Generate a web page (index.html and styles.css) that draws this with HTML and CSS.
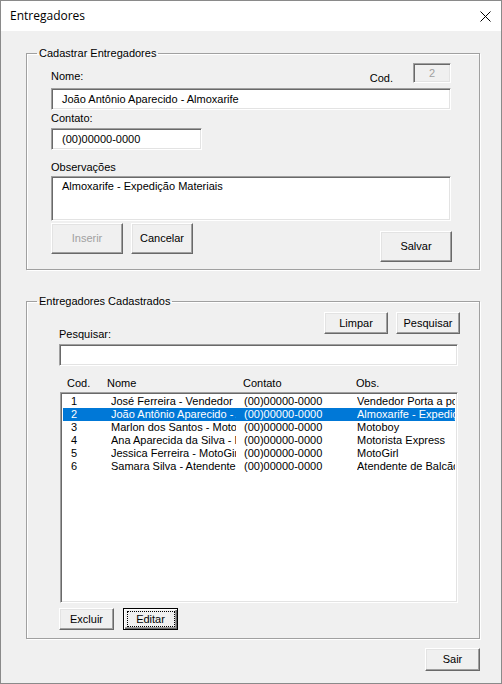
FILE: index.html
```html
<!DOCTYPE html>
<html lang="pt-BR">
<head>
<meta charset="utf-8">
<title>Entregadores</title>
<link rel="stylesheet" href="styles.css">
</head>
<body>
<div class="window">
  <div class="titlebar">
    <span class="title">Entregadores</span>
    <svg class="close" width="11" height="11" viewBox="0 0 11 11"><path d="M0.5 0.5 L10.5 10.5 M10.5 0.5 L0.5 10.5" stroke="#000" stroke-width="1" fill="none"/></svg>
  </div>
  <div class="client">
    <fieldset class="group">
      <legend>Cadastrar Entregadores</legend>
      <div class="cad">
        <div class="row-top">
          <span class="lbl">Nome:</span>
          <span class="spacer"></span>
          <span class="lbl lbl-cod">Cod.</span>
          <div class="sunken codbox">2</div>
        </div>
        <div class="sunken field field-nome">João Antônio Aparecido - Almoxarife</div>
        <span class="lbl lbl-contato">Contato:</span>
        <div class="sunken field field-contato">(00)00000-0000</div>
        <span class="lbl lbl-obs">Observações</span>
        <div class="sunken field field-obs">Almoxarife - Expedição Materiais</div>
        <div class="row-btns">
          <button class="btn btn-ins" disabled>Inserir</button>
          <button class="btn btn-cancel">Cancelar</button>
          <span class="spacer"></span>
          <button class="btn btn-salvar">Salvar</button>
        </div>
      </div>
    </fieldset>

    <fieldset class="group group-reg">
      <legend>Entregadores Cadastrados</legend>
      <div class="reg">
        <div class="row-search">
          <span class="lbl lbl-pesq">Pesquisar:</span>
          <div class="search-btns">
            <button class="btn btn-small">Limpar</button>
            <button class="btn btn-small btn-pesq">Pesquisar</button>
          </div>
        </div>
        <div class="sunken field field-search"></div>
        <div class="headers">
          <span class="h h-cod">Cod.</span>
          <span class="h h-nome">Nome</span>
          <span class="h h-contato">Contato</span>
          <span class="h h-obs">Obs.</span>
        </div>
        <div class="sunken listbox">
          <div class="lrow"><span class="c c1">1</span><span class="c c2">José Ferreira - Vendedor Porta a Porta</span><span class="c c3">(00)00000-0000</span><span class="c c4">Vendedor Porta a porta</span></div>
          <div class="lrow sel"><span class="c c1">2</span><span class="c c2">João Antônio Aparecido - Almoxarife</span><span class="c c3">(00)00000-0000</span><span class="c c4">Almoxarife - Expedição Materiais</span></div>
          <div class="lrow"><span class="c c1">3</span><span class="c c2">Marlon dos Santos - Motoboy</span><span class="c c3">(00)00000-0000</span><span class="c c4">Motoboy</span></div>
          <div class="lrow"><span class="c c1">4</span><span class="c c2">Ana Aparecida da Silva - Motorista</span><span class="c c3">(00)00000-0000</span><span class="c c4">Motorista Express</span></div>
          <div class="lrow"><span class="c c1">5</span><span class="c c2">Jessica Ferreira - MotoGirl</span><span class="c c3">(00)00000-0000</span><span class="c c4">MotoGirl</span></div>
          <div class="lrow"><span class="c c1">6</span><span class="c c2">Samara Silva - Atendente</span><span class="c c3">(00)00000-0000</span><span class="c c4">Atendente de Balcão</span></div>
        </div>
        <div class="row-bottom">
          <button class="btn btn-small">Excluir</button>
          <button class="btn btn-small btn-default">Editar</button>
        </div>
      </div>
    </fieldset>

    <button class="btn btn-sair">Sair</button>
  </div>
</div>
</body>
</html>
```
FILE: styles.css
```css
* { box-sizing: border-box; }

body {
  margin: 0;
  background: #fff;
  font: 11px/13px "Liberation Sans", Arial, sans-serif;
  color: #000;
}

.window {
  width: 502px;
  height: 684px;
  border: 1px solid #8a8a8a;
  background: #f0f0f0;
  display: flex;
  flex-direction: column;
}

.titlebar {
  height: 30px;
  flex: none;
  background: #fff;
  display: flex;
  align-items: center;
  justify-content: space-between;
  padding: 0 10px 0 9px;
}

.title {
  font: 12px/16px "Open Sans", "Noto Sans", sans-serif;
  color: #000;
}

.close { display: block; }

.client {
  flex: 1;
  display: flex;
  flex-direction: column;
  padding: 16px 22px 0 25px;
}

.group {
  margin: 0;
  padding: 0;
  width: 454px;
  min-width: 0;
  border: 1px solid #a0a0a0;
  box-shadow: inset 1px 1px 0 #fff, 1px 1px 0 #fff;
}

.group legend {
  margin-left: 10px;
  padding: 0 2px;
  line-height: 13px;
}

.group-reg { margin-top: 25px; }

.lbl { display: block; line-height: 13px; }

.spacer { flex: 1; }

.sunken {
  background: #fff;
  border: 1px solid;
  border-color: #a0a0a0 #fff #fff #a0a0a0;
  box-shadow: inset 1px 1px 0 #696969, inset -1px -1px 0 #e3e3e3;
}

.field {
  height: 22px;
  padding: 0 10px;
  line-height: 20px;
  white-space: nowrap;
  overflow: hidden;
}

/* Cadastrar */
.cad { padding: 3px 28px 7px 24px; }

.row-top {
  display: flex;
  align-items: flex-end;
  height: 20px;
}

.lbl-cod {
  margin-right: 20px;
  margin-bottom: -2px;
}

.codbox {
  width: 38px;
  height: 20px;
  background: #f0f0f0;
  color: #a0a0a0;
  text-align: center;
  line-height: 18px;
}

.field-nome { margin-top: 5px; width: 100%; }
.lbl-contato { margin-top: 2px; }
.field-contato { margin-top: 3px; width: 151px; }
.lbl-obs { margin-top: 11px; }
.field-obs {
  margin-top: 2px;
  height: 45px;
  width: 100%;
  line-height: 13px;
  padding-top: 3px;
}

.btn {
  font: inherit;
  color: #000;
  background: #f0f0f0;
  border: 1px solid;
  border-color: #fff #696969 #696969 #fff;
  box-shadow: inset -1px -1px 0 #a0a0a0, inset 1px 1px 0 #e3e3e3;
  padding: 0;
  margin: 0;
  line-height: 13px;
}

.btn:disabled { color: #a0a0a0; }

.row-btns {
  margin-top: 2px;
  display: flex;
  align-items: flex-start;
}

.btn-ins { width: 72px; height: 31px; }
.btn-cancel { width: 62px; height: 31px; margin-left: 8px; }
.btn-salvar { width: 72px; height: 31px; margin-top: 8px; margin-right: -1px; }

/* Cadastrados */
.reg { padding: 4px 20px 8px 32px; }

.row-search {
  display: flex;
  justify-content: space-between;
  height: 29px;
}

.lbl-pesq { align-self: flex-end; }

.search-btns { display: flex; align-self: flex-start; margin-right: -1px; }

.btn-small { width: 55px; height: 22px; }
.search-btns .btn-small { width: 64px; }
.btn-pesq { margin-left: 8px; }

.field-search { margin-top: 3px; width: 399px; }

.headers {
  margin-top: 11px;
  display: flex;
  height: 13px;
  padding-left: 8px;
}

.h-cod { width: 40px; }
.h-nome { width: 136px; }
.h-contato { width: 113px; }

.listbox {
  margin-top: 2px;
  margin-left: 1px;
  width: 398px;
  height: 211px;
  padding: 2px;
}

.lrow {
  display: flex;
  height: 13px;
  line-height: 13px;
  white-space: nowrap;
}

.lrow.sel { background: #0078d7; color: #fff; }

.c { overflow: hidden; flex: none; }
.c1 { width: 48px; padding-left: 8px; }
.c2 { width: 125px; margin-right: 8px; }
.c3 { width: 105px; margin-right: 8px; }
.c4 { flex: 1; min-width: 0; }

.row-bottom {
  margin-top: 5px;
  display: flex;
}

.btn-default {
  margin-left: 9px;
  position: relative;
  border-color: #000;
  box-shadow: inset 1px 1px 0 #fff, inset -1px -1px 0 #696969, inset -2px -2px 0 #a0a0a0;
}

.btn-default::after {
  content: "";
  position: absolute;
  left: 3px;
  top: 2px;
  right: 2px;
  bottom: 2px;
  border: 1px dotted #000;
}

.btn-sair {
  width: 55px;
  height: 23px;
  margin-top: 9px;
  align-self: flex-end;
  margin-right: -1px;
}
```
